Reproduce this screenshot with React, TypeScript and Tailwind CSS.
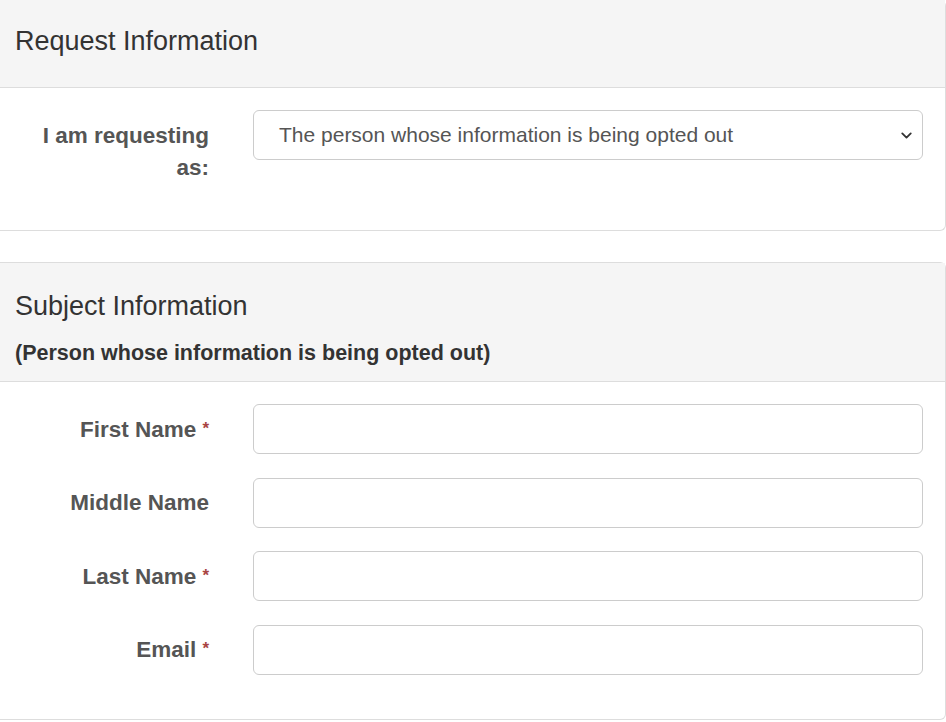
import { ChevronDown } from 'lucide-react';

const font = { fontFamily: '"Liberation Sans", Arial, Helvetica, sans-serif' };

function Field({ label, required }: { label: string; required?: boolean }) {
  return (
    <div className="flex items-center">
      <div className="w-[231px] shrink-0 pr-[22px] text-right text-[22.5px] font-bold leading-[32px] text-[#555]">
        {label}
        {required && <span className="ml-[6px] align-[3px] text-[17px] text-[#a94442]">*</span>}
      </div>
      <div className="flex-1 px-[22px]">
        <input
          type="text"
          className="block h-[50px] w-full rounded-[6px] border border-[#ccc] bg-white px-[18px] text-[21px] text-[#555] outline-none"
        />
      </div>
    </div>
  );
}

export default function App() {
  return (
    <div className="w-[946px] min-h-[722px] bg-white" style={font}>
      <div className="rounded-r-[6px] border-b border-r border-[#ddd]">
        <div className="h-[88px] border-b border-[#ddd] bg-[#f5f5f5] px-[15px] pt-[25px]">
          <h3 className="text-[27px] leading-[32px] text-[#333]">Request Information</h3>
        </div>
        <div className="flex items-start pb-[46px] pt-[22px]">
          <div className="w-[231px] shrink-0 pl-[22px] pr-[22px] pt-[10px] text-right text-[22.5px] font-bold leading-[32px] text-[#555]">
            I am requesting as:
          </div>
          <div className="flex-1 px-[22px]">
            <div className="relative flex h-[50px] w-full items-center rounded-[6px] border border-[#ccc] bg-white pl-[25px] text-[21px] text-[#555]">
              The person whose information is being opted out
              <ChevronDown className="absolute right-[7px] top-[16px] h-[17px] w-[17px] text-[#333]" strokeWidth={2.6} />
            </div>
          </div>
        </div>
      </div>

      <div className="mt-[31px] rounded-r-[6px] border-y border-r border-[#ddd]">
        <div className="h-[119px] border-b border-[#ddd] bg-[#f5f5f5] px-[15px] pt-[27px]">
          <h3 className="text-[27px] leading-[32px] text-[#333]">Subject Information</h3>
          <div className="mt-[16px] text-[21.5px] font-bold leading-[30px] text-[#333]">
            (Person whose information is being opted out)
          </div>
        </div>
        <div className="flex flex-col gap-[23.5px] pb-[44px] pt-[22px]">
          <Field label="First Name" required />
          <Field label="Middle Name" />
          <Field label="Last Name" required />
          <Field label="Email" required />
        </div>
      </div>
    </div>
  );
}
